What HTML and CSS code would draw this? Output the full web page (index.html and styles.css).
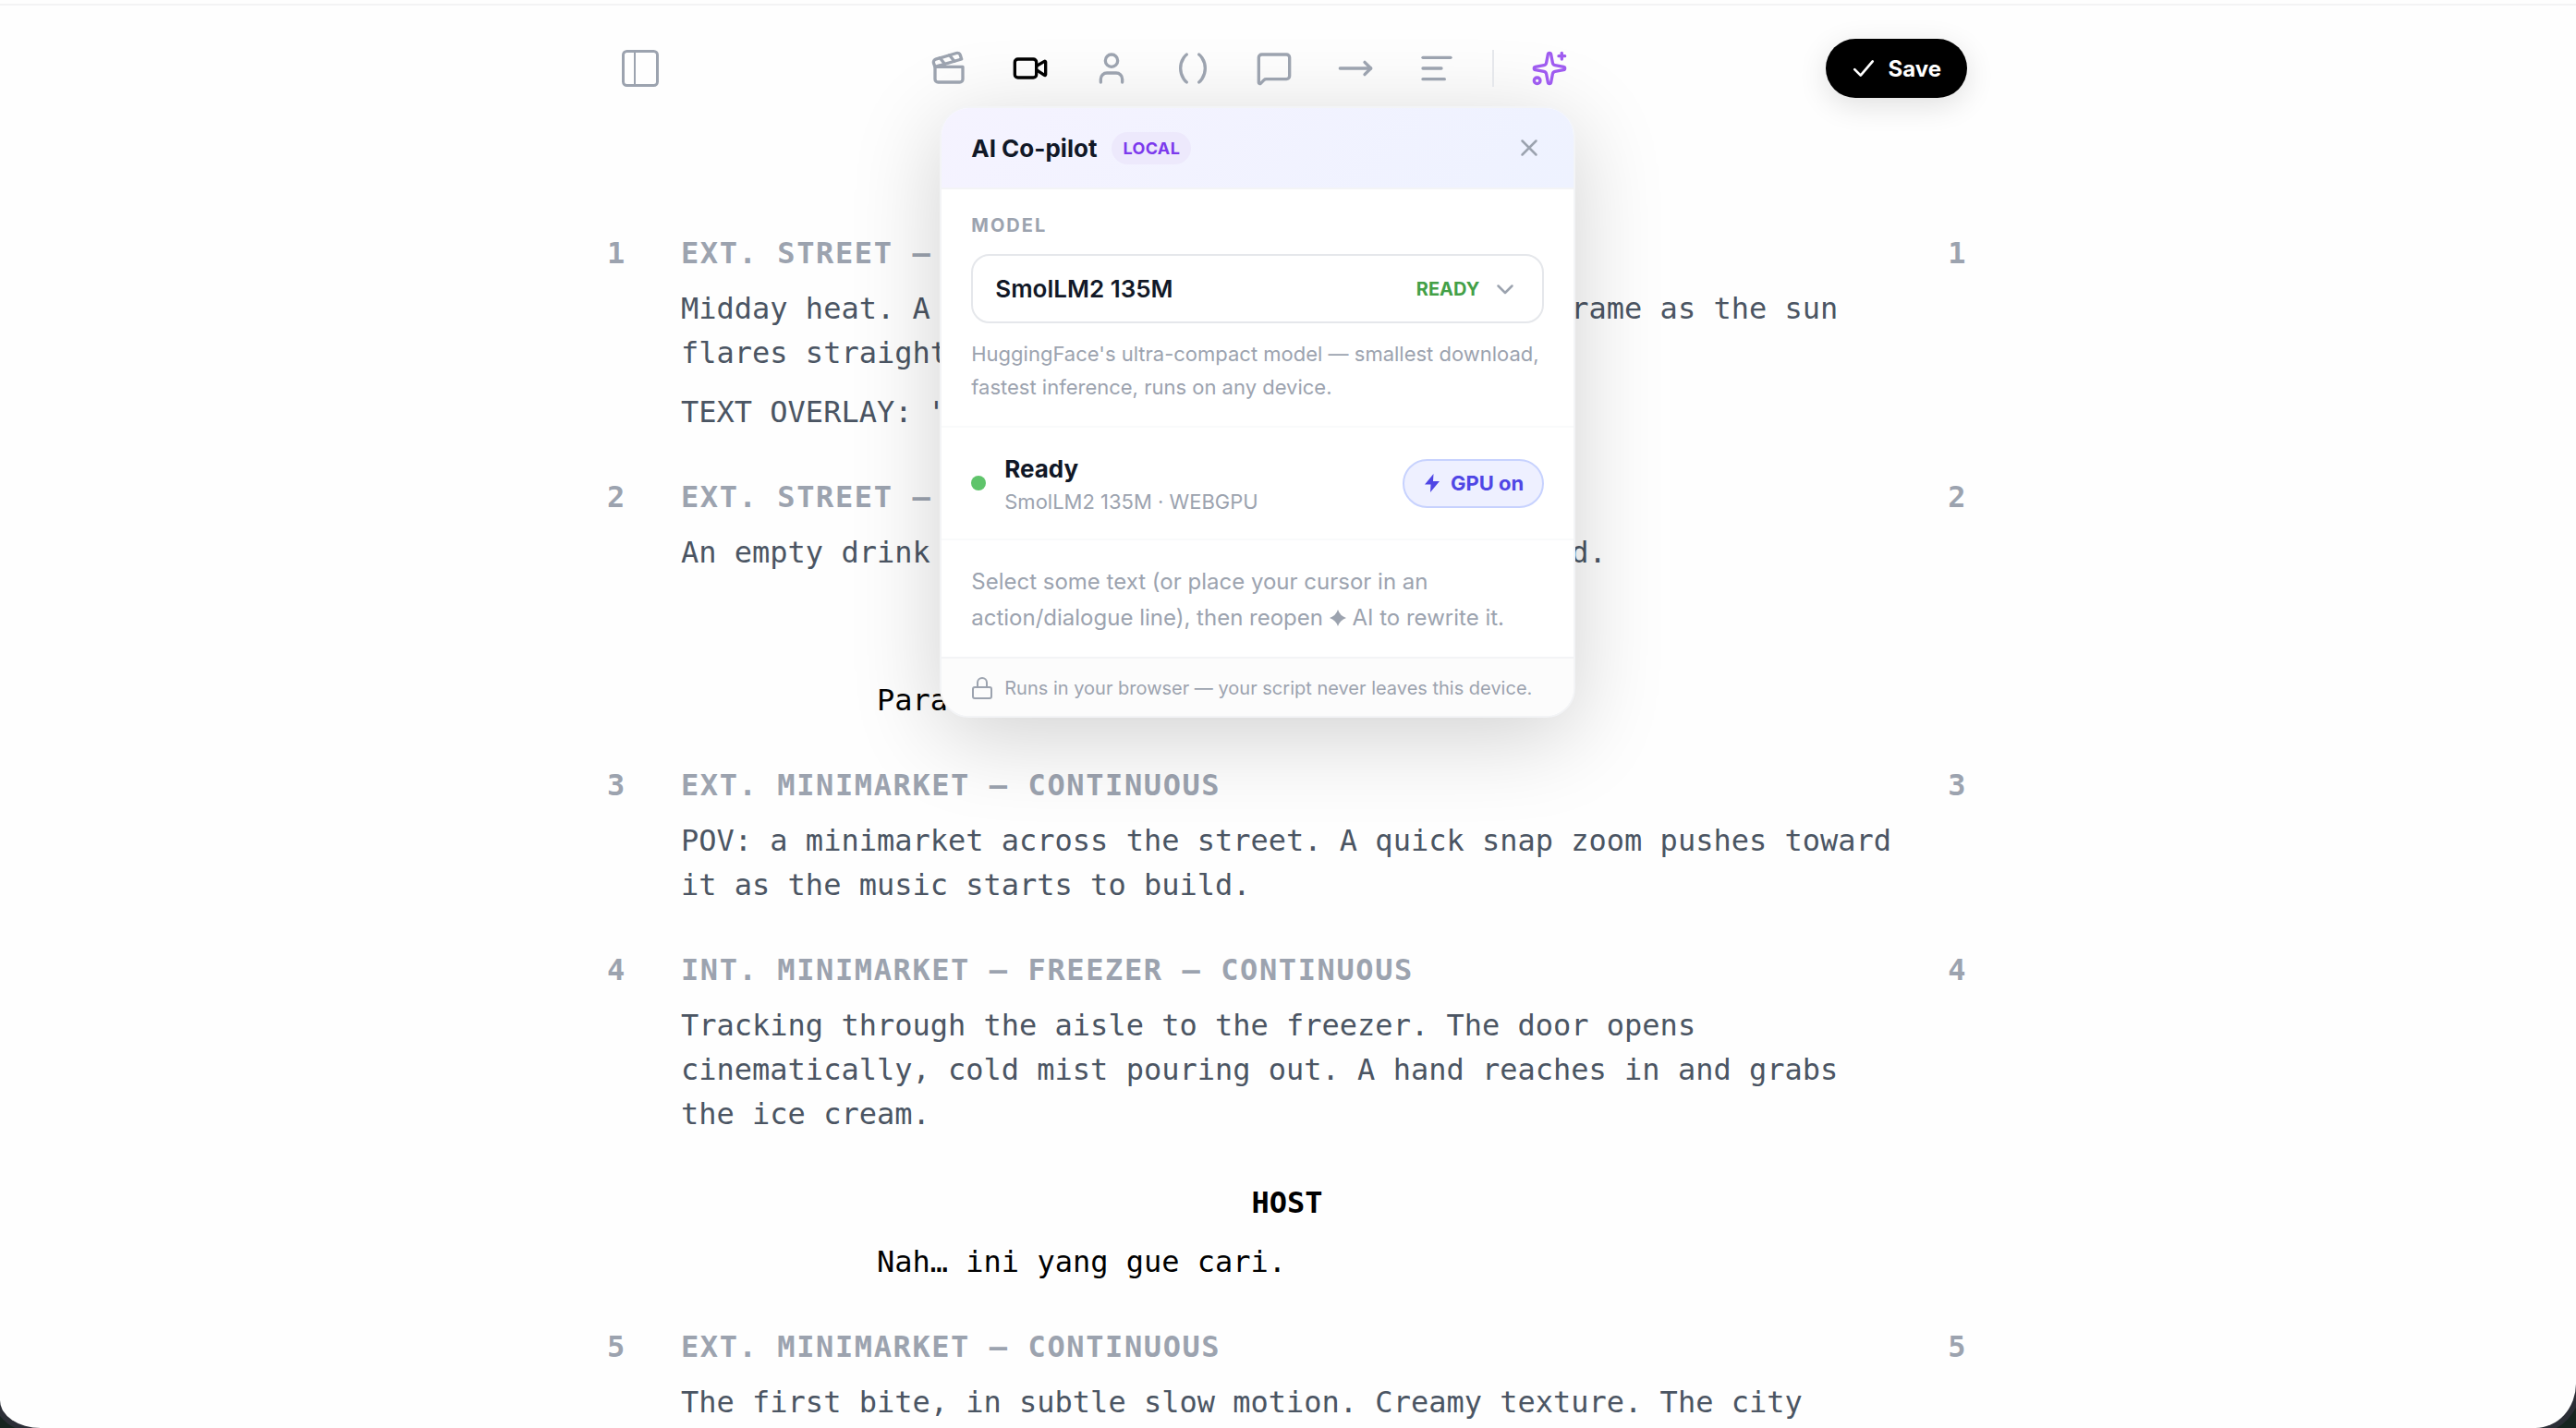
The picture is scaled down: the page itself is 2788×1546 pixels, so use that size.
FILE: index.html
```html
<!DOCTYPE html>
<html lang="en">
  <head>
    <meta charset="utf-8">
    <title>Script editor</title>
    <link rel="stylesheet" href="styles.css">
  </head>
  <body>
  <div class="window">

    <header class="topbar">
      <button class="tool" type="button" aria-label="Toggle sidebar">
        <svg class="icon" viewBox="0 0 40 40">
          <rect x="1.5" y="1.5" width="37" height="37" rx="4" stroke-width="3"/>
          <path d="M14 1.5v37" stroke-width="2"/>
        </svg>
      </button>

      <div class="toolbar">
        <button class="tool" type="button" aria-label="Scene">
          <svg class="icon" viewBox="0 0 24 24"><path d="M20.2 6 3 11l-.9-2.4c-.3-1.1.3-2.2 1.3-2.5l13.5-4c1.1-.3 2.2.3 2.5 1.3Z"/><path d="m6.2 5.3 3.1 3.9"/><path d="m12.4 3.4 3.1 4"/><path d="M3 11h18v8a2 2 0 0 1-2 2H5a2 2 0 0 1-2-2Z"/></svg>
        </button>
        <button class="tool active" type="button" aria-label="Action">
          <svg class="icon" viewBox="0 0 24 24"><path d="m16 13 5.223 3.482a.5.5 0 0 0 .777-.416V7.87a.5.5 0 0 0-.752-.432L16 10.5"/><rect x="2" y="6" width="14" height="12" rx="2"/></svg>
        </button>
        <button class="tool" type="button" aria-label="Character">
          <svg class="icon" viewBox="0 0 24 24"><path d="M19 21v-2a4 4 0 0 0-4-4H9a4 4 0 0 0-4 4v2"/><circle cx="12" cy="7" r="4"/></svg>
        </button>
        <button class="tool" type="button" aria-label="Parenthetical">
          <svg class="icon" viewBox="0 0 24 24"><path d="M8 21s-4-3-4-9 4-9 4-9"/><path d="M16 3s4 3 4 9-4 9-4 9"/></svg>
        </button>
        <button class="tool" type="button" aria-label="Dialogue">
          <svg class="icon" viewBox="0 0 24 24"><path d="M22 17a2 2 0 0 1-2 2H6.828a2 2 0 0 0-1.414.586l-2.202 2.202A.71.71 0 0 1 2 21.286V5a2 2 0 0 1 2-2h16a2 2 0 0 1 2 2z"/></svg>
        </button>
        <button class="tool" type="button" aria-label="Transition">
          <svg class="icon" viewBox="0 0 24 24"><path d="M18 8l4 4-4 4"/><path d="M2 12h20"/></svg>
        </button>
        <button class="tool" type="button" aria-label="General text">
          <svg class="icon" viewBox="0 0 24 24"><path d="M21 5H3"/><path d="M15 12H3"/><path d="M17 19H3"/></svg>
        </button>
        <span class="divider"></span>
        <button class="tool ai" type="button" aria-label="AI">
          <svg class="icon" viewBox="0 0 24 24"><path d="M11.017 2.814a1 1 0 0 1 1.966 0l1.051 5.558a2 2 0 0 0 1.594 1.594l5.558 1.051a1 1 0 0 1 0 1.966l-5.558 1.051a2 2 0 0 0-1.594 1.594l-1.051 5.558a1 1 0 0 1-1.966 0l-1.051-5.558a2 2 0 0 0-1.594-1.594l-5.558-1.051a1 1 0 0 1 0-1.966l5.558-1.051a2 2 0 0 0 1.594-1.594z"/><path d="M20 2v4"/><path d="M22 4h-4"/><circle cx="4" cy="20" r="2"/></svg>
        </button>

        <!-- co-pilot menu, opens under the toolbar -->
        <section class="copilot">
          <div class="copilot-head">
            <h2>AI Co-pilot</h2>
            <span class="badge">LOCAL</span>
            <button class="close" type="button" aria-label="Close">
              <svg viewBox="0 0 20 20"><path d="M2.500 2.500l15 15M17.500 2.500l-15 15"/></svg>
            </button>
          </div>

          <div class="model">
            <label for="model">MODEL</label>
            <div class="model-box">
              <select id="model">
                <option>SmolLM2 135M</option>
              </select>
              <span class="model-state">READY</span>
              <svg class="chevron" viewBox="0 0 20 20"><path d="M2.500 6.500l7.500 7.500 7.500-7.500"/></svg>
            </div>
            <p>HuggingFace's ultra-compact model — smallest download, fastest inference, runs on any device.</p>
          </div>

          <div class="status">
            <span class="dot"></span>
            <div class="status-text">
              <strong>Ready</strong>
              <span>SmolLM2 135M · WEBGPU</span>
            </div>
            <button class="gpu" type="button">
              <svg viewBox="0 0 20 20"><path d="M11.500 0L2 11.500h6.500L8 20l10-12h-7z"/></svg>
              GPU on
            </button>
          </div>

          <p class="hint">Select some text (or place your cursor in an action/dialogue line), then reopen <svg viewBox="0 0 20 20"><path d="M10 0q2.500 7.500 10 10-7.500 2.500-10 10-2.500-7.500-10-10 7.500-2.500 10-10z"/></svg> AI to rewrite it.</p>

          <div class="copilot-foot">
            <svg viewBox="0 0 24 24"><rect x="2" y="11" width="20" height="12" rx="2"/><path d="M7 11V6a5 5 0 0 1 10 0v5"/></svg>
            <span>Runs in your browser — your script never leaves this device.</span>
          </div>
        </section>
      </div>

      <button class="save" type="button">
        <svg viewBox="0 0 24 24"><path d="M3 13l6 6L21 5"/></svg>
        Save
      </button>
    </header>

    <main class="script">
      <h3 class="scene"><span>1</span><span>EXT. STREET – DAY</span><span>1</span></h3>
      <p class="action">Midday heat. A young man, exhausted, drifts into frame as the sun flares straight into the lens.</p>
      <p class="action">TEXT OVERLAY: "12:47 PM"</p>

      <h3 class="scene"><span>2</span><span>EXT. STREET – CONTINUOUS</span><span>2</span></h3>
      <p class="action">An empty drink can rolls across the scorched ground.</p>
      <p class="character">HOST</p>
      <p class="dialogue">Parah, panas banget.</p>

      <h3 class="scene"><span>3</span><span>EXT. MINIMARKET – CONTINUOUS</span><span>3</span></h3>
      <p class="action">POV: a minimarket across the street. A quick snap zoom pushes toward it as the music starts to build.</p>

      <h3 class="scene"><span>4</span><span>INT. MINIMARKET – FREEZER – CONTINUOUS</span><span>4</span></h3>
      <p class="action">Tracking through the aisle to the freezer. The door opens cinematically, cold mist pouring out. A hand reaches in and grabs the ice cream.</p>
      <p class="character">HOST</p>
      <p class="dialogue">Nah… ini yang gue cari.</p>

      <h3 class="scene"><span>5</span><span>EXT. MINIMARKET – CONTINUOUS</span><span>5</span></h3>
      <p class="action">The first bite, in subtle slow motion. Creamy texture. The city</p>
    </main>

  </div>
  </body>
</html>
```
FILE: styles.css
```css
* {
  box-sizing: border-box;
}

body {
  margin: 0;
  background: #16241f;
  font-family: Inter, "Liberation Sans", sans-serif;
  color: #111827;
  overflow: hidden;
}

h2, h3, p {
  margin: 0;
}

button {
  font-family: inherit;
  border: none;
  padding: 0;
  background: none;
  cursor: pointer;
}

svg {
  display: block;
  flex-shrink: 0;
  fill: none;
  stroke: currentColor;
  stroke-linecap: round;
  stroke-linejoin: round;
}

.window {
  height: 100vh;
  padding-top: 4px;
  overflow: hidden;
  background: #fefefe;
  border-radius: 0 0 44px 44px / 0 0 48px 30px;
  box-shadow: 0 0 0 6px #2b2e36;
}

/* top bar */
.topbar {
  display: flex;
  justify-content: space-between;
  align-items: center;
  padding: 32px calc(50% - 735px) 0 calc(50% - 737px);
  border-top: 2px solid #f3f3f4;
}

.toolbar {
  position: relative;
  display: flex;
  align-items: center;
  gap: 16px;
}

.tool {
  display: flex;
  align-items: center;
  justify-content: center;
  position: relative;
  z-index: 2;
  width: 72px;
  height: 72px;
  color: #9ca3af;
}

.tool.active {
  color: #000;
}

.tool.ai {
  color: #9f5cf0;
}

.icon {
  width: 40px;
  height: 40px;
  stroke-width: 2;
}

.divider {
  width: 2px;
  height: 40px;
  margin: 0 8px;
  background: #e5e7eb;
  position: relative;
  z-index: 2;
}

.save {
  display: flex;
  align-items: center;
  gap: 14px;
  height: 64px;
  padding: 0 28px;
  border-radius: 32px;
  background: #000;
  color: #fff;
  font-size: 24px;
  font-weight: 700;
  box-shadow: 0 8px 32px rgba(0, 0, 0, 0.12);
}

.save svg {
  width: 26px;
  height: 26px;
  stroke-width: 2.5;
}

/* co-pilot menu */
.copilot {
  position: absolute;
  z-index: 1;
  top: 77px;
  right: 8px;
  width: 688px;
  overflow: hidden;
  border: 2px solid #f3f4f6;
  border-radius: 32px;
  background: #fff;
  box-shadow: 0 20px 96px rgba(0, 0, 0, 0.18);
}

.copilot-head {
  display: flex;
  align-items: center;
  gap: 16px;
  height: 88px;
  padding: 0 32px;
  background: linear-gradient(135deg, #f5f3ff, #eef2ff);
  border-bottom: 2px solid #f3f4f6;
}

.copilot-head h2 {
  font-size: 26px;
  font-weight: 700;
}

.badge {
  padding: 0 12px;
  border-radius: 18px;
  background: #ede9fc;
  color: #7c3aed;
  font-size: 18px;
  font-weight: 700;
  line-height: 35px;
  letter-spacing: 0.02em;
}

.close {
  margin-left: auto;
  padding: 6px;
  color: #9ca3af;
}

.close svg {
  width: 20px;
  height: 20px;
  stroke-width: 2.5;
}

.model {
  padding: 24px 32px;
  border-bottom: 2px solid #f9fafb;
}

.model label {
  display: block;
  margin-bottom: 16px;
  color: #9ca3af;
  font-size: 20px;
  font-weight: 700;
  line-height: 30px;
  letter-spacing: 0.1em;
}

.model-box {
  display: flex;
  align-items: center;
  gap: 18px;
  height: 75px;
  padding: 0 30px 0 24px;
  border: 2px solid #e5e7eb;
  border-radius: 20px;
}

.model-box select {
  flex: 1;
  appearance: none;
  border: none;
  padding: 0;
  background: none;
  color: #111827;
  font-family: inherit;
  font-size: 26px;
  font-weight: 600;
}

.model-state {
  color: #43a047;
  font-size: 20px;
  font-weight: 700;
}

.chevron {
  width: 20px;
  height: 20px;
  color: #9ca3af;
  stroke-width: 2.5;
}

.model p {
  margin-top: 15px;
  color: #9ca3af;
  font-size: 22px;
  line-height: 36px;
}

.status {
  display: flex;
  align-items: center;
  gap: 20px;
  height: 122px;
  padding: 0 32px;
  border-bottom: 2px solid #f9fafb;
}

.dot {
  width: 16px;
  height: 16px;
  border-radius: 50%;
  background: #5fc46b;
}

.status-text {
  display: flex;
  flex-direction: column;
  flex: 1;
  padding-top: 4px;
}

.status-text strong {
  font-size: 26px;
  font-weight: 700;
  line-height: 36px;
}

.status-text span {
  color: #9ca3af;
  font-size: 22px;
  line-height: 34px;
}

.gpu {
  display: flex;
  align-items: center;
  gap: 10px;
  height: 53px;
  padding: 0 20px;
  border: 2px solid #c7d2fe;
  border-radius: 27px;
  background: #eef0ff;
  color: #4f46e5;
  font-size: 22px;
  font-weight: 700;
}

.gpu svg {
  width: 20px;
  height: 20px;
  fill: currentColor;
  stroke: none;
}

.hint {
  padding: 25px 32px 23px;
  color: #9ca3af;
  font-size: 24px;
  line-height: 39px;
}

.hint svg {
  display: inline-block;
  width: 18px;
  height: 18px;
  fill: currentColor;
  stroke: none;
  vertical-align: -1px;
}

.copilot-foot {
  display: flex;
  align-items: center;
  gap: 12px;
  height: 64px;
  padding: 2px 32px 0;
  border-top: 2px solid #f3f4f6;
  background: #fcfcfc;
  color: #9ca3af;
  font-size: 20px;
}

.copilot-foot svg {
  width: 24px;
  height: 24px;
  stroke-width: 2;
}

/* screenplay */
.script {
  padding: 140px calc(50% - 735px) 0 calc(50% - 737px);
  font-family: "DejaVu Sans Mono", "Liberation Mono", monospace;
  font-size: 32px;
  line-height: 48px;
}

.scene {
  display: grid;
  grid-template-columns: 80px 1fr auto;
  margin: 44px 0 12px;
  color: #9ca3af;
  font-size: 32px;
  font-weight: 700;
  letter-spacing: 0.05em;
}

.scene:first-child {
  margin-top: 0;
}

.action {
  padding: 0 76px 0 80px;
  color: #4b5563;
}

.action + .action {
  margin-top: 16px;
}

.character {
  margin-top: 48px;
  color: #000;
  font-weight: 700;
  text-align: center;
}

.dialogue {
  margin-top: 16px;
  padding: 0 292px;
  color: #000;
}
```
